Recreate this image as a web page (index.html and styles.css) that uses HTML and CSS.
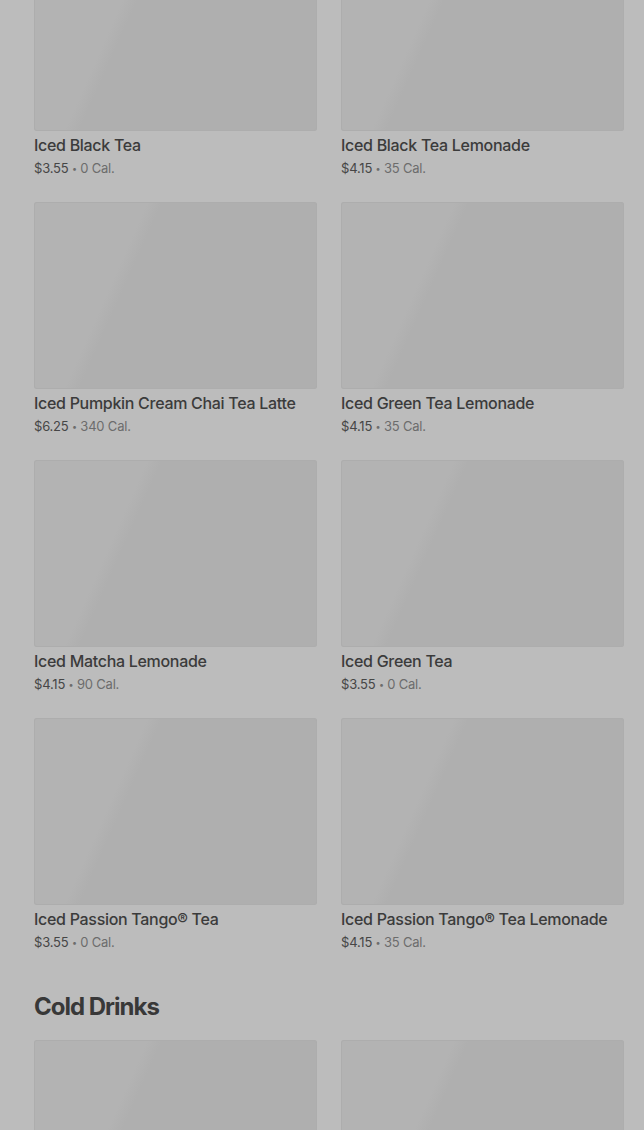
FILE: index.html
```html
<!DOCTYPE html>
<html lang="en">
<head>
    <meta charset="UTF-8">
    <meta name="viewport" content="width=device-width, initial-scale=1.0">
    <title>Menu</title>
    <link rel="stylesheet" href="styles.css">
</head>
<body>
    <div class="menu">
        <section class="category">
            <div class="grid">
                <div class="item">
                    <div class="thumb"></div>
                    <div class="name">Iced Black Tea</div>
                    <div class="meta"><span class="price">$3.55</span> <span class="dot">•</span> 0 Cal.</div>
                </div>
                <div class="item">
                    <div class="thumb"></div>
                    <div class="name">Iced Black Tea Lemonade</div>
                    <div class="meta"><span class="price">$4.15</span> <span class="dot">•</span> 35 Cal.</div>
                </div>
                <div class="item">
                    <div class="thumb"></div>
                    <div class="name">Iced Pumpkin Cream Chai Tea Latte</div>
                    <div class="meta"><span class="price">$6.25</span> <span class="dot">•</span> 340 Cal.</div>
                </div>
                <div class="item">
                    <div class="thumb"></div>
                    <div class="name">Iced Green Tea Lemonade</div>
                    <div class="meta"><span class="price">$4.15</span> <span class="dot">•</span> 35 Cal.</div>
                </div>
                <div class="item">
                    <div class="thumb"></div>
                    <div class="name">Iced Matcha Lemonade</div>
                    <div class="meta"><span class="price">$4.15</span> <span class="dot">•</span> 90 Cal.</div>
                </div>
                <div class="item">
                    <div class="thumb"></div>
                    <div class="name">Iced Green Tea</div>
                    <div class="meta"><span class="price">$3.55</span> <span class="dot">•</span> 0 Cal.</div>
                </div>
                <div class="item">
                    <div class="thumb"></div>
                    <div class="name">Iced Passion Tango® Tea</div>
                    <div class="meta"><span class="price">$3.55</span> <span class="dot">•</span> 0 Cal.</div>
                </div>
                <div class="item">
                    <div class="thumb"></div>
                    <div class="name">Iced Passion Tango® Tea Lemonade</div>
                    <div class="meta"><span class="price">$4.15</span> <span class="dot">•</span> 35 Cal.</div>
                </div>
            </div>
        </section>

        <section class="category">
            <h2>Cold Drinks</h2>
            <div class="grid">
                <div class="item">
                    <div class="thumb"></div>
                </div>
                <div class="item">
                    <div class="thumb"></div>
                </div>
            </div>
        </section>
    </div>
</body>
</html>
```

FILE: styles.css
```css
body {
    margin: 0;
    background-color: #bcbcbc;
    font-family: Inter, "Noto Sans", sans-serif;
    color: #3a3a3a;
}
.menu {
    padding: 0 20px 0 34px;
    margin-top: -56px;
}
.grid {
    display: grid;
    grid-template-columns: 1fr 1fr;
    column-gap: 24px;
    row-gap: 24px;
}
.thumb {
    height: 187px;
    border-radius: 3px;
    box-shadow: inset 0 0 0 1px #adadad;
    background: linear-gradient(114deg, #b3b3b3 0%, #b3b3b3 31%, #afafaf 35%, #afafaf 100%);
}
.name {
    margin-top: 3px;
    font-size: 16px;
    line-height: 22px;
    font-weight: 500;
    letter-spacing: -0.3px;
    color: #3b3b3b;
    white-space: nowrap;
}
.meta {
    margin-top: 2px;
    height: 20px;
    font-size: 13px;
    line-height: 20px;
    letter-spacing: -0.2px;
    color: #6c6c6c;
}
.price {
    color: #464646;
}
.dot {
    font-size: 9px;
    line-height: 1;
    vertical-align: 1px;
}
h2 {
    margin: 39px 0 17px;
    font-size: 24px;
    line-height: 32px;
    font-weight: 700;
    letter-spacing: -1px;
    color: #383838;
}
```
